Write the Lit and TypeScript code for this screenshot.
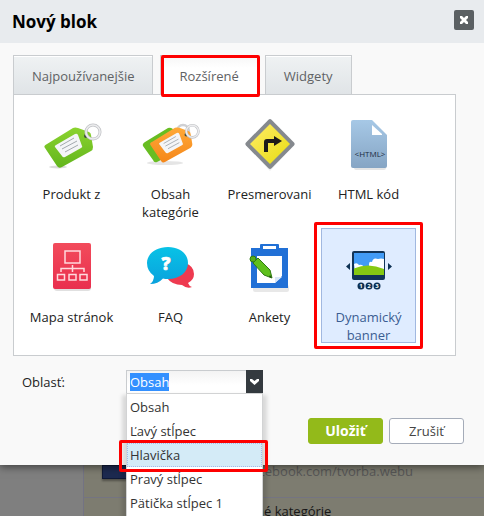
import { LitElement, html, svg, css } from "lit";
import { customElement, state } from "lit/decorators.js";
import { classMap } from "lit/directives/class-map.js";

const tag = (fill: string) => svg`
  <path d="M5 25 L31 9 Q33 8 36 9 L47 13 Q49 14 49 16 L51 28 Q51 31 49 32 L20 48 Q17 50 15 47 L3 29 Q1 27 5 25Z" fill=${fill} />
  <path d="M14 26 L33 15 Q35 14 36 16 L40 27 Q41 28 39 29 L23 38 Q21 39 20 37 L13 28 Q12 27 14 26Z" fill="#f4f5f7" />
  <path d="M18 27 L32 19 M20 30 L35 22 M23 33 L36 26" stroke="#a3a9ae" stroke-width="1" fill="none" />
  <circle cx="44" cy="17" r="2" fill="#3d4a3a" />
  <circle cx="51" cy="13" r="7" fill="none" stroke="#bfc1c4" stroke-width="3" />
  <circle cx="51" cy="13" r="7" fill="none" stroke="#ececee" stroke-width="1.6" />`;

const icons = {
  product: html`<svg width="60" height="50" viewBox="0 0 60 50">
    <defs><linearGradient id="g" x2="0" y2="1"><stop stop-color="#8bd32f" /><stop offset="1" stop-color="#62b51c" /></linearGradient></defs>
    <ellipse cx="16" cy="48" rx="9" ry="1.5" fill="#000" opacity=".14" />
    ${tag("url(#g)")}</svg>`,
  category: html`<svg width="60" height="50" viewBox="0 0 60 50">
    <defs><linearGradient id="o" x2="0" y2="1"><stop stop-color="#ffa938" /><stop offset="1" stop-color="#f5871a" /></linearGradient></defs>
    <ellipse cx="24" cy="44" rx="18" ry="2" fill="#000" opacity=".1" />
    <path d="M4 23 L27 9 Q29 8 32 10 L36 12 L20 41 L16 43 Q13 44 12 41 L2 27 Q1 25 4 23Z" fill="#68bd22" />
    <circle cx="42" cy="12" r="6" fill="none" stroke="#cfd0d3" stroke-width="2.4" />
    <g transform="translate(7 1) scale(.87)">${tag("url(#o)")}</g></svg>`,
  redirect: html`<svg width="52" height="54" viewBox="0 0 52 54">
    <defs><linearGradient id="y" x2="1" y2="1"><stop stop-color="#ffec66" /><stop offset="1" stop-color="#e7dc12" /></linearGradient></defs>
    <path d="M4 30 L26 54 L48 30Z" fill="#000" opacity=".07" />
    <path d="M24.500 2.700 Q26 1.300 27.500 2.700 L50 25.500 Q51.300 27 50 28.500 L27.500 51.300 Q26 52.700 24.500 51.300 L2 28.500 Q.7 27 2 25.500Z" fill="#85898e" />
    <path d="M26 7 L46 27 L26 47 L6 27Z" fill="url(#y)" />
    <path d="M22 35 V25 Q22 24 23 24 H31" fill="none" stroke="#1c1a19" stroke-width="4" />
    <path d="M30 19 L38 24 L30 29Z" fill="#1c1a19" /></svg>`,
  code: html`<svg width="40" height="52" viewBox="0 0 40 52">
    <defs><linearGradient id="b" x2="0" y2="1"><stop stop-color="#a6c8e6" /><stop offset="1" stop-color="#86a5c4" /></linearGradient></defs>
    <rect x="5" y="46" width="32" height="6" rx="2" fill="#000" opacity=".1" />
    <path d="M4 2 H23 L38 17 V48 Q38 50 36 50 H4 Q2 50 2 48 V4 Q2 2 4 2Z" fill="url(#b)" />
    <path d="M23 7 L33 16 V17 H23Z" fill="#fff" />
    <text x="21" y="39" text-anchor="middle" font-family="Open Sans, sans-serif" font-size="8" fill="#1b2b40">&lt;HTML&gt;</text></svg>`,
  sitemap: html`<svg width="46" height="52" viewBox="0 0 46 52">
    <defs><linearGradient id="r" x2="0" y2="1"><stop stop-color="#f24b5b" /><stop offset="1" stop-color="#e92f4e" /></linearGradient></defs>
    <rect x="5" y="5" width="37" height="45" rx="3" fill="#000" opacity=".12" />
    <rect x="4" y="2" width="38" height="46" rx="2" fill="url(#r)" />
    <g fill="none" stroke="#ffd9dd" stroke-width="1.5">
      <rect x="16" y="10" width="15" height="12" /><path d="M12 31 V27.500 H35 V31 M23.500 24 V31" />
      <rect x="8.500" y="33.500" width="7" height="5.500" /><rect x="20" y="33.500" width="7" height="5.500" /><rect x="31" y="33.500" width="7" height="5.500" />
    </g></svg>`,
  faq: html`<svg width="50" height="44" viewBox="0 0 50 44">
    <defs><linearGradient id="c" x2="0" y2="1"><stop stop-color="#08c2e6" /><stop offset="1" stop-color="#0aa2dd" /></linearGradient></defs>
    <path d="M39 18 Q48 21 48 29 Q48 35 42 38 Q43 41 46 42 Q41 44 36 40 Q26 40 21 33Z" fill="#ee3a50" />
    <path d="M22 2 C34 2 42 9 42 18 C42 27 34 34 22 34 Q19 34 17 33.500 Q12 39 4 39 Q8 36 8 31 Q1 26 1 18 C1 9 10 2 22 2Z" fill="url(#c)" />
    <text x="21" y="25" text-anchor="middle" font-family="Open Sans, sans-serif" font-size="18" font-weight="800" fill="#1479a0">?</text>
    <text x="20" y="25" text-anchor="middle" font-family="Open Sans, sans-serif" font-size="18" font-weight="800" fill="#fff" stroke="#fff" stroke-width=".7">?</text></svg>`,
  poll: html`<svg width="42" height="52" viewBox="0 0 42 52">
    <rect x="4" y="44" width="36" height="7" rx="2" fill="#000" opacity=".09" />
    <path d="M2 7 H11 V4 Q11 3 12 3 H29 Q30 3 30 4 V7 H39 V47 H2Z" fill="#2170d6" />
    <rect x="14" y="5" width="13" height="3" fill="#fff" />
    <path d="M8 15 H33 V35 L26 42 H8Z" fill="#fff" /><path d="M26 42 V36 H33Z" fill="#d9e6f7" />
    <circle cx="4" cy="18" r="3" fill="#56ad1b" stroke="#2f7a12" />
    <path d="M4 22 L9 17 L21 29 L23 37 L15 34Z" fill="#5fc01c" stroke="#2f7a12" />
    <path d="M21 34 L23 37 L20 36Z" fill="#234f12" /></svg>`,
  banner: html`<svg width="48" height="50" viewBox="0 -8 48 50">
    <defs><clipPath id="s"><rect x="9" y="3" width="30" height="23" /></clipPath></defs>
    <rect x="7" y="1" width="33" height="29" rx="2" fill="#123458" />
    <g clip-path="url(#s)"><rect x="8" y="2" width="31" height="23" fill="#429bf6" />
      <path d="M24 21 V14 Q24 11 27 12 Q28 7 33 9 Q36 8 39 9 V22Z" fill="#fff" />
      <path d="M9 14 Q12 12 14 15 Q18 14 19 18 L10 21Z" fill="#fff" />
      <path d="M8 19 Q23 12 39 19 V25 H8Z" fill="#86c913" /></g>
    <path d="M5 13 V20 L1 16.500Z M43 13 V20 L47 16.500Z" fill="#0d3154" />
    <g fill="#0d3154"><circle cx="16" cy="36" r="3.500" /><circle cx="24" cy="36" r="3.500" /><circle cx="32" cy="36" r="3.500" /></g>
    <g fill="#fff" font-family="Open Sans, sans-serif" font-size="6" font-weight="700" text-anchor="middle">
      <text x="16" y="38">1</text><text x="24" y="38">2</text><text x="32" y="38">3</text></g></svg>`,
};

const blocks = [
  { label: "Produkt z", icon: icons.product },
  { label: "Obsah kategórie", icon: icons.category },
  { label: "Presmerovani", icon: icons.redirect },
  { label: "HTML kód", icon: icons.code },
  { label: "Mapa stránok", icon: icons.sitemap },
  { label: "FAQ", icon: icons.faq },
  { label: "Ankety", icon: icons.poll },
  { label: "Dynamický banner", icon: icons.banner },
];

const tabs = ["Najpoužívanejšie", "Rozšírené", "Widgety"];
const areas = ["Obsah", "Ľavý stĺpec", "Hlavička", "Pravý stĺpec", "Pätička stĺpec 1"];

@customElement("app-root")
export class AppRoot extends LitElement {
  @state() tab = 1;
  @state() block = 7;
  @state() area = 0;
  @state() hovered = 2;

  static styles = css`
    :host { display: block; min-height: 100vh; background: #7f7f7f; color: #222; font: 13px/18px "Open Sans", "Noto Sans", sans-serif; }
    * { box-sizing: border-box; }
    button, input { font: inherit; color: inherit; margin: 0; }
    button { cursor: pointer; }
    .screen { display: flex; flex-direction: column; height: 100vh; overflow: hidden; }
    .dialog { position: relative; z-index: 1; flex: none; background: #f9f9f9; box-shadow: 0 2px 8px rgba(0, 0, 0, .5); }
    header { display: flex; align-items: center; justify-content: space-between; height: 43px; padding: 0 10px 0 12px; background: #e8ebee; }
    h1 { margin: 0; font-size: 17px; line-height: 22px; font-weight: 700; color: #000; }
    .close { display: grid; place-items: center; width: 20px; height: 20px; margin-bottom: 3px; padding: 0; border: 0; border-radius: 2px; background: #5b6063; }
    .body { padding: 12px 28px 0 13px; }
    .tabs { display: flex; gap: 7px; }
    .tab { position: relative; height: 39px; padding: 2px 18px 0; border: 1px solid #c9cccf; border-bottom: 0; background: linear-gradient(#eff2f3, #e0e4e7); box-shadow: inset 0 1px #fff; color: #5f6264; }
    .tab.active { height: 40px; margin-bottom: -1px; padding-bottom: 1px; z-index: 1; background: linear-gradient(#f6f6f6, #fff 12px); }
    .marked::after { content: ""; position: absolute; border: 3px solid #fe0000; border-radius: 2px; pointer-events: none; }
    .tab.marked::after { inset: -1px -3px -2px 0; }
    .panel { display: grid; grid-template-columns: repeat(auto-fill, 95px); gap: 8px 4px; padding: 10px 10px 12px; border: 1px solid #c9cccf; background: #fff; }
    .block { position: relative; display: flex; flex-direction: column; align-items: center; height: 115px; padding: 8px 0 0; border: 1px solid transparent; background: none; }
    .block svg { display: block; }
    .icon { display: grid; place-items: center; flex: none; height: 60px; margin-bottom: 11px; }
    .block.active { border-color: #a1b8e0; background: #dfecff; color: #3b5d92; }
    .block.marked::after { inset: -7px -8px; }
    .label { max-width: 84px; }
    .form { display: flex; align-items: center; padding: 14px 20px 0 22px; }
    .form label { width: 104px; }
    .combo { position: relative; display: flex; width: 137px; height: 24px; }
    .combo input { flex: 1; min-width: 0; height: 24px; padding: 0 3px; border: 1px solid #c9cccf; border-right: 0; outline: 0; background: linear-gradient(#f3f3f3, #fff 14px); }
    .combo input::selection { background: #3390ff; color: #fff; }
    .arrow { display: grid; place-items: center; width: 17px; height: 24px; padding: 0; border: 0; background: #343a3f; }
    .list { position: absolute; top: 23px; left: 0; right: 0; margin: 0; padding: 1px 0; list-style: none; border: 1px solid #d2d3d4; background: #fff; box-shadow: 0 6px 4px 4px rgba(0, 0, 0, .13); }
    .list li { position: relative; height: 24px; padding: 2px; border: 1px solid transparent; color: #333; white-space: nowrap; }
    .list .over { border: 1px dotted #a3bae9; background: #d4ebf7; }
    .list .marked { z-index: 1; }
    .list .marked::after { inset: -4px -7px -6px -9px; }
    footer { display: flex; justify-content: flex-end; gap: 6px; padding: 24px 20px 21px; }
    .action { width: 75px; height: 26px; padding: 0; border: 1px solid #a5acb9; border-radius: 3px; background: #fff; color: #444; }
    .primary { border-color: #93ba1a; background: #93ba1a; color: #fff; font-size: 14px; font-weight: 700; }
    .page { flex: 1; margin-left: 83px; border-left: 1px solid #737383; background: #7d7c70; color: #565656; }
    .row { display: flex; align-items: flex-start; height: 33px; padding-left: 18px; border-bottom: 1px solid #747482; }
    .thumb { width: 50px; height: 14px; border: 1px solid #101a38; background: #1d2a50; box-shadow: 0 2px 2px rgba(0, 0, 0, .35); }
    .page a { color: inherit; text-decoration: none; margin-left: 95px; line-height: 12px; }
    .page p { margin: 4px 0 0 172px; color: #171717; }
  `;

  firstUpdated() {
    const input = this.renderRoot.querySelector("input")!;
    input.focus();
    input.select();
  }

  render() {
    return html`<div class="screen">
      <main class="dialog" role="dialog" aria-labelledby="title">
        <header>
          <h1 id="title">Nový blok</h1>
          <button class="close" aria-label="Zavrieť"><svg width="10" height="8" viewBox="0 0 10 8"><path d="M1 0 H3 L5 2 L7 0 H9 V2 L7 4 L9 6 V8 H7 L5 6 L3 8 H1 V6 L3 4 L1 2Z" fill="#fff" /></svg></button>
        </header>
        <div class="body">
          <div class="tabs" role="tablist">
            ${tabs.map((t, i) => html`<button role="tab" aria-selected=${i === this.tab}
              class=${classMap({ tab: true, active: i === this.tab, marked: i === 1 })}
              @click=${() => (this.tab = i)}>${t}</button>`)}
          </div>
          <div class="panel" role="tabpanel">
            ${blocks.map((b, i) => html`<button aria-pressed=${i === this.block}
              class=${classMap({ block: true, active: i === this.block, marked: i === 7 })}
              @click=${() => (this.block = i)}><span class="icon">${b.icon}</span><span class="label">${b.label}</span></button>`)}
          </div>
        </div>
        <div class="form">
          <label for="area">Oblasť:</label>
          <div class="combo">
            <input id="area" role="combobox" aria-expanded="true" aria-controls="areas" autocomplete="off" .value=${areas[this.area]} />
            <button class="arrow" aria-label="Otvoriť zoznam" tabindex="-1"><svg width="9" height="6" viewBox="0 0 9 6"><path d="M0 0 H2 L4.500 2 L7 0 H9 V2 L4.500 6 L0 2Z" fill="#fff" /></svg></button>
            <ul class="list" id="areas" role="listbox" aria-label="Oblasť">
              ${areas.map((a, i) => html`<li role="option" aria-selected=${i === this.area}
                class=${classMap({ over: i === this.hovered, marked: i === 2 })}
                @mouseenter=${() => (this.hovered = i)} @click=${() => (this.area = i)}>${a}</li>`)}
            </ul>
          </div>
        </div>
        <footer>
          <button class="action primary">Uložiť</button>
          <button class="action">Zrušiť</button>
        </footer>
      </main>
      <section class="page">
        <div class="row"><div class="thumb"></div><a href="#">facebook.com/tvorba.webu</a></div>
        <p>né kategórie</p>
      </section>
    </div>`;
  }
}
